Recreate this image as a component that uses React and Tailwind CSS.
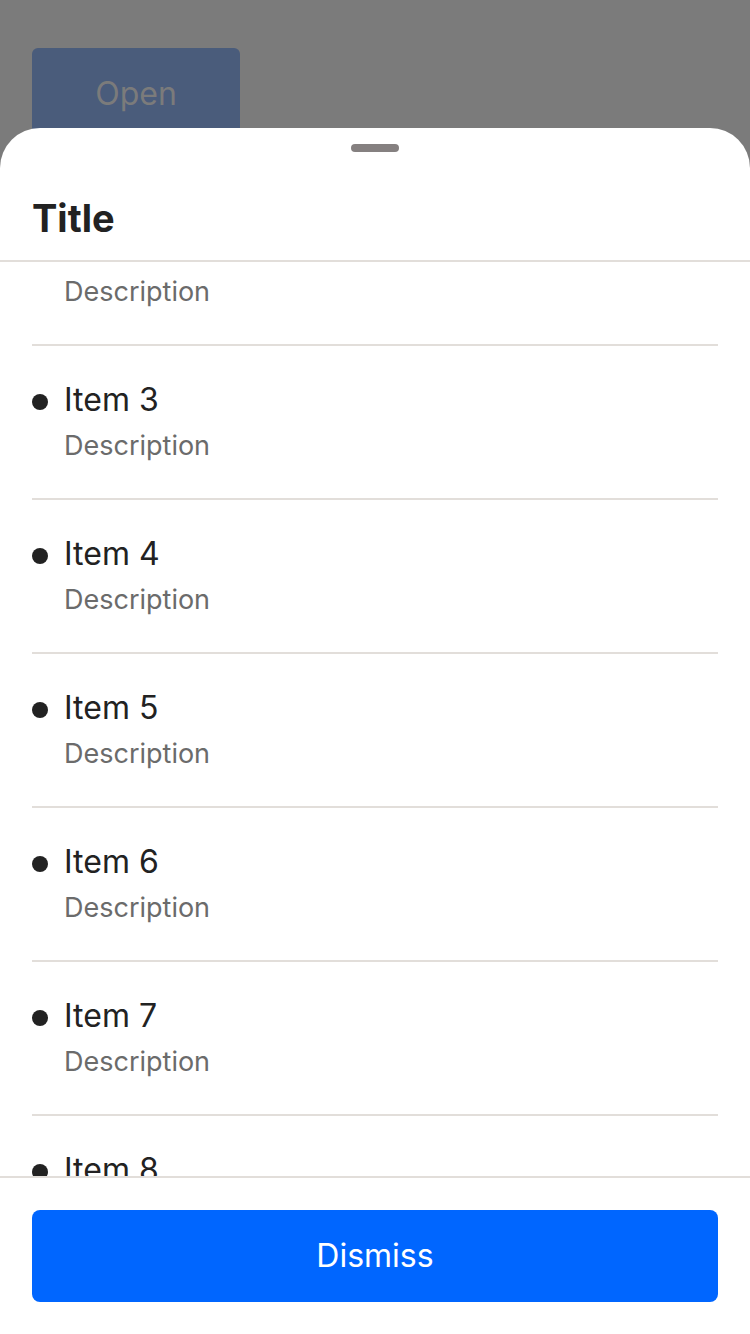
const items = [2, 3, 4, 5, 6, 7, 8, 9, 10];

function ListItem({ n }) {
    return (
        <div className="border-b-2 border-[#e2deda] pt-[34px] pb-[34px]">
            <div className="flex items-center h-10">
                <span className="w-4 h-4 mt-1 rounded-full bg-[#222222] mr-4"></span>
                <span className="text-[32px] leading-10 text-[#222222]">Item {n}</span>
            </div>
            <div className="pl-8 mt-2 text-[27px] leading-9 text-[#6b6b6b]">Description</div>
        </div>
    );
}

export default function App() {
    return (
        <div
            className="relative h-[1334px] w-[750px] overflow-hidden bg-[#7b7b7b]"
            style={{ fontFamily: 'Inter, "Noto Sans", sans-serif' }}
        >
            <div className="pt-12 pl-8">
                <button className="w-[208px] h-[92px] rounded-md bg-[#4a5c7b] text-[32px] text-[#7b7b7b]">
                    Open
                </button>
            </div>

            {/* bottom sheet */}
            <div className="absolute left-0 right-0 bottom-0 h-[1206px] bg-white rounded-t-[40px] flex flex-col">
                <div className="border-b-2 border-[#e2deda] pb-5">
                    <div className="flex justify-center pt-4">
                        <div className="w-12 h-2 rounded-full bg-[#858080]"></div>
                    </div>
                    <h1 className="mt-[44px] px-8 leading-[44px] text-[38px] font-bold text-[#222222]">Title</h1>
                </div>

                <div className="flex-1 overflow-hidden px-8">
                    <div className="-mt-[70px]">
                        {items.map((n) => (
                            <ListItem key={n} n={n} />
                        ))}
                    </div>
                </div>

                <div className="border-t-2 border-[#e2deda] px-8 pt-8 pb-8">
                    <button className="w-full h-[92px] rounded-lg bg-[#0066ff] text-white text-[32px]">
                        Dismiss
                    </button>
                </div>
            </div>
        </div>
    );
}
